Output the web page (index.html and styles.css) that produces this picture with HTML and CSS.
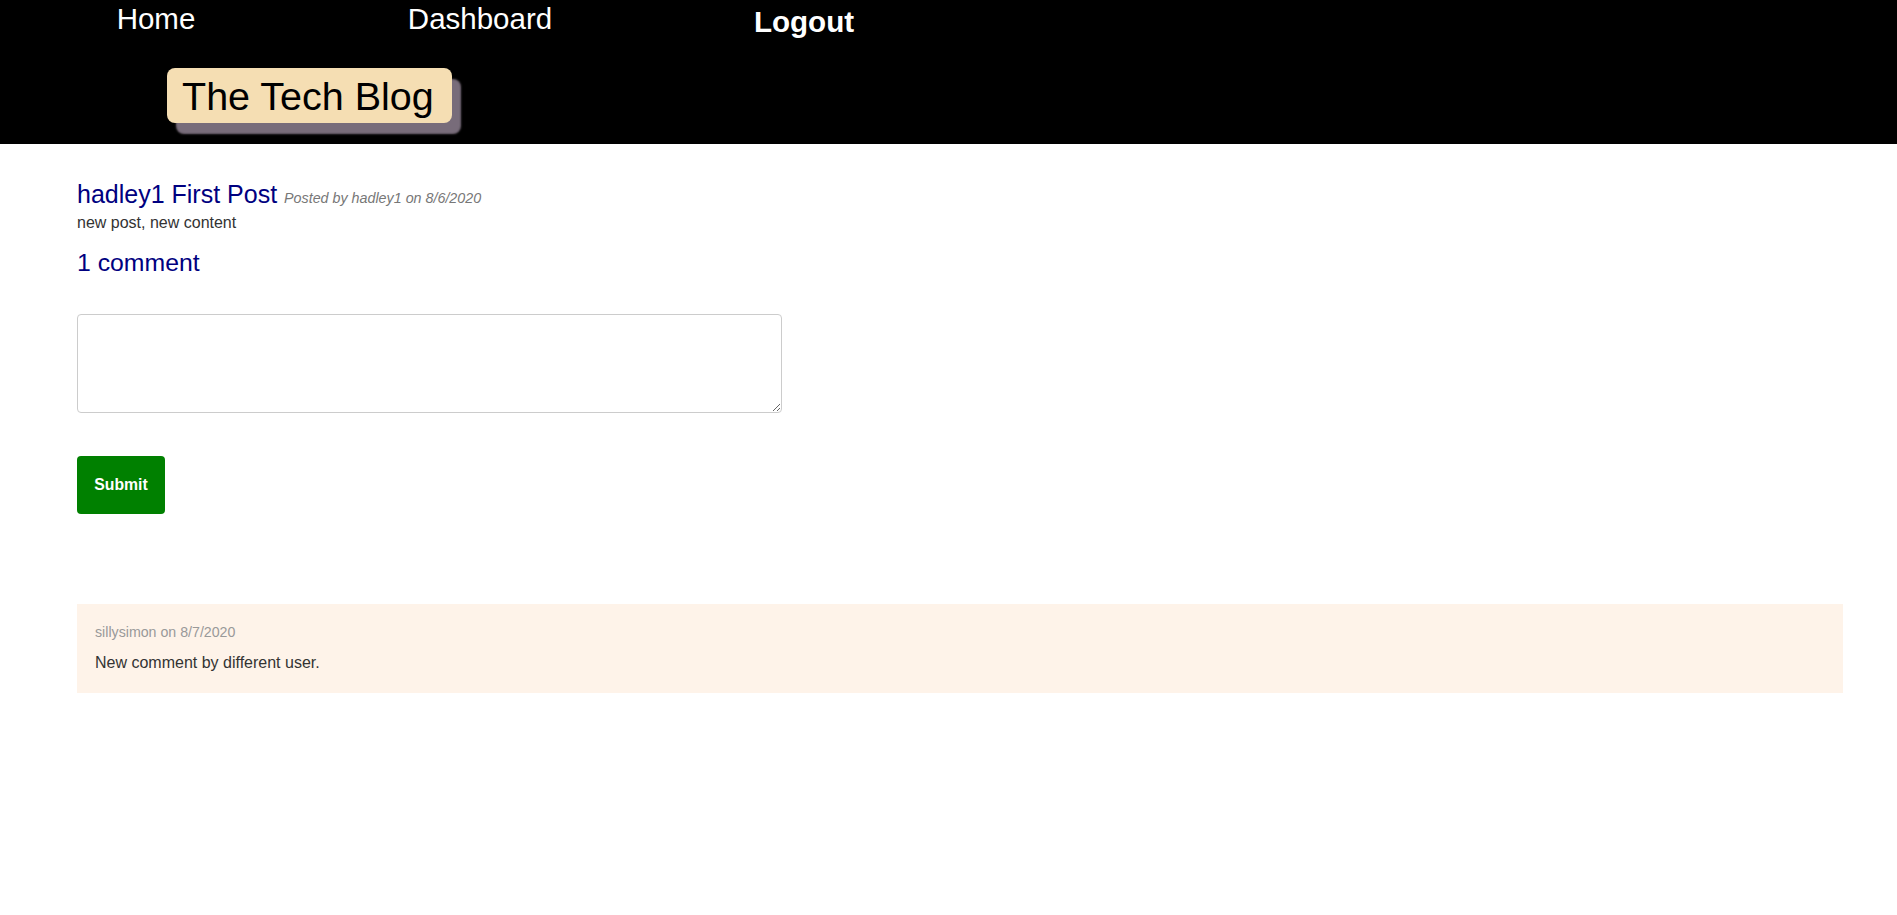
FILE: index.html
```html
<!DOCTYPE html>
<html lang="en">
<head>
<meta charset="utf-8">
<title>The Tech Blog</title>
<link rel="stylesheet" href="styles.css">
</head>
<body>
<header class="site-header">
  <nav class="nav">
    <a class="nav-link" href="#">Home</a>
    <a class="nav-link" href="#">Dashboard</a>
    <a class="nav-link nav-logout" href="#">Logout</a>
  </nav>
  <div class="brand-row">
    <h1 class="brand">The Tech Blog</h1>
  </div>
</header>
<main class="content">
  <section class="post">
    <h2 class="post-title">hadley1 First Post <span class="post-meta">Posted by hadley1 on 8/6/2020</span></h2>
    <p class="post-body">new post, new content</p>
    <h3 class="comment-count">1 comment</h3>
  </section>
  <form class="comment-form">
    <textarea class="comment-input" name="comment"></textarea>
    <button class="submit-btn" type="submit">Submit</button>
  </form>
  <section class="comments">
    <div class="comment">
      <p class="comment-meta">sillysimon on 8/7/2020</p>
      <p class="comment-text">New comment by different user.</p>
    </div>
  </section>
</main>
</body>
</html>
```

FILE: styles.css
```css
html, body {
  margin: 0;
  padding: 0;
  background: #fff;
  font-family: "Liberation Sans", Arial, Helvetica, sans-serif;
}

.site-header {
  background: #000;
  padding: 2px 0 21px;
}

.nav {
  display: grid;
  grid-template-columns: repeat(3, 324px);
  justify-items: center;
  margin-left: -6px;
  height: 34px;
}

.nav-link {
  color: #fff;
  text-decoration: none;
  font-size: 29.5px;
  line-height: 34px;
}

.nav-logout {
  font-weight: bold;
  font-size: 29.6px;
  padding-top: 3px;
}

.brand-row {
  margin-top: 32px;
  padding-left: 167px;
}

.brand {
  display: inline-block;
  margin: 0;
  background: #f5deb3;
  color: #000;
  font-weight: normal;
  font-size: 39.5px;
  line-height: 44px;
  padding: 6px 18px 5px 15px;
  border-radius: 8px;
  box-shadow: 9px 11px 2px #786c7a;
}

.content {
  padding: 36.5px 54px 0 77px;
}

.post-title {
  margin: 0;
  font-weight: normal;
  font-size: 25px;
  line-height: 27px;
  color: #000080;
}

.post-meta {
  font-size: 14.3px;
  font-style: italic;
  color: #777;
}

.post-body {
  margin: 0;
  font-size: 16px;
  line-height: 22px;
  color: #333;
}

.comment-count {
  margin: 14px 0 0;
  font-weight: normal;
  font-size: 24.8px;
  line-height: 30px;
  color: #000080;
}

.comment-form {
  margin-top: 36px;
}

.comment-input {
  display: block;
  box-sizing: border-box;
  width: 705px;
  height: 99px;
  margin: 0;
  border: 1px solid #ccc;
  border-radius: 4px;
  font-family: inherit;
  font-size: 16px;
}

.submit-btn {
  display: block;
  box-sizing: border-box;
  margin-top: 43px;
  width: 88px;
  height: 58px;
  padding: 0;
  border: none;
  border-radius: 4px;
  background: #008000;
  color: #fff;
  font-family: inherit;
  font-weight: bold;
  font-size: 15.8px;
}

.comments {
  margin-top: 90px;
}

.comment {
  background: #fef3e9;
  padding: 18px;
}

.comment-meta {
  margin: 0;
  font-size: 14.2px;
  line-height: 20px;
  color: #999;
}

.comment-text {
  margin: 9px 0 0;
  font-size: 16px;
  line-height: 24px;
  color: #333;
}
```
